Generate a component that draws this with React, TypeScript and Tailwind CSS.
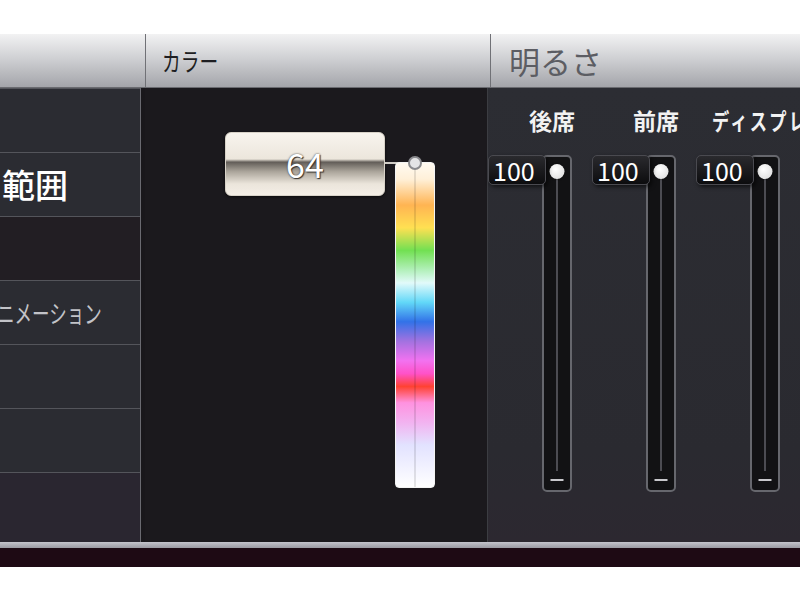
import React from "react";

const jp = "font-['Noto_Sans_CJK_JP','Noto_Sans',sans-serif]";

const rainbow =
  "bg-[linear-gradient(to_bottom,#fffaf2_0%,#fff0d8_5%,#ffb452_13%,#ffe052_20%,#72e052_27%,#b2f0ba_33%,#e2fafa_37%,#62d8f8_43%,#3272e8_49%,#a272e0_55%,#f272f0_61%,#ff52c8_65%,#ff4232_69%,#ff92e0_74%,#f2b2f0_80%,#e2e2ff_87%,#ffffff_100%)]";

function MenuRow({ children, dark }: { children?: React.ReactNode; dark?: boolean }) {
  return (
    <div
      className={`flex h-[64px] items-center overflow-hidden border-t border-[#54555b] ${
        dark ? "bg-[#221e23]" : "bg-[#2b2c32]"
      }`}
    >
      {children}
    </div>
  );
}

function Fader({ label, wide }: { label: string; wide?: boolean }) {
  return (
    <div className="flex w-[104px] flex-col">
      <div
        className={`h-[32px] whitespace-nowrap text-[23px] leading-[32px] font-bold text-[#f2f2f2] ${
          wide ? "ml-[16px]" : "ml-[41px]"
        }`}
      >
        <span className={wide ? "inline-block origin-left scale-x-75 tracking-[3px]" : ""}>{label}</span>
      </div>
      <div className="mt-[19px] flex items-start">
        <div className="z-10 flex h-[30px] w-[58px] items-center rounded-[5px] border border-[#4a4a50] bg-[linear-gradient(to_bottom,#2a2a2e,#0c0c0e)] pl-[4px] text-[25px] leading-none text-white shadow-[2px_2px_4px_rgba(0,0,0,0.6)]">
          100
        </div>
        <div className="relative -ml-[4px] flex h-[337px] w-[30px] justify-center rounded-[5px] border-2 border-[#66676d] bg-[#121214]">
          <div className="mt-[14px] h-[300px] w-[2px] bg-[#4c4c52]" />
          <div className="absolute top-[7px] left-1/2 h-[15px] w-[15px] -translate-x-1/2 rounded-full bg-[radial-gradient(circle_at_40%_35%,#ffffff,#d8d8d8)] shadow-[0_0_2px_rgba(0,0,0,0.8)]" />
          <div className="absolute bottom-[9px] left-1/2 h-[2px] w-[13px] -translate-x-1/2 bg-[#c8c8cc]" />
        </div>
      </div>
    </div>
  );
}

export default function App() {
  return (
    <div className={`flex h-[600px] w-[800px] flex-col overflow-hidden bg-white ${jp}`}>
      <div className="h-[34px]" />
      {/* header */}
      <div className="flex h-[54px] border-b border-[#6a6b70] bg-[linear-gradient(to_bottom,#f2f2f3,#d0d1d4_45%,#a4a5aa)]">
        <div className="w-[146px] border-r border-[#707176]" />
        <div className="flex w-[345px] items-center border-r border-[#707176] pl-[16px]">
          <span className="inline-block origin-left scale-x-75 text-[25px] leading-none text-[#1e1e22]">カラー</span>
        </div>
        <div className="flex flex-1 items-center pl-[18px]">
          <span className="text-[31px] leading-none text-[#5c5d63]">明るさ</span>
        </div>
      </div>

      {/* body */}
      <div className="flex h-[454px]">
        <div className="flex w-[146px]">
          <div className="flex w-[141px] flex-col border-r border-[#6a6a70] bg-[#2b2c32]">
            <MenuRow />
            <MenuRow>
              <span className="pl-[2px] text-[33px] leading-none font-medium text-white">範囲</span>
            </MenuRow>
            <MenuRow dark />
            <MenuRow>
              <span className="-ml-[3px] inline-block origin-left scale-x-[0.7] whitespace-nowrap text-[25px] leading-none text-[#c2c3c8]">
                ニメーション
              </span>
            </MenuRow>
            <MenuRow />
            <MenuRow />
            <div className="flex-1 border-t border-[#54555b] bg-[#2a2630]" />
          </div>
          <div className="flex-1 bg-[#19171b]" />
        </div>

        <div className="flex w-[345px] items-start border-r border-[#3c3d42] bg-[#1b191d] pl-[80px]">
          <div className="mt-[44px] flex h-[64px] w-[160px] items-center justify-center rounded-[6px] border border-[#d8d2c8] bg-[linear-gradient(to_bottom,#f8f4ee_0%,#ece6dc_42%,#625d58_47%,#aaa49a_62%,#ebe5db_82%,#f4eee6_100%)] shadow-[0_1px_3px_rgba(0,0,0,0.6)]">
            <span className="text-[34px] leading-none text-white [text-shadow:0_0_2px_#3a3632,1px_1px_1px_#3a3632]">
              64
            </span>
          </div>
          <div className="mt-[74px] h-[2px] w-[20px] bg-[#d0ccc6]" />
          <div
            className={`relative mt-[74px] -ml-[10px] flex h-[326px] w-[40px] justify-center rounded-[4px] border border-[#f4f4f4] ${rainbow}`}
          >
            <div className="h-full w-[2px] bg-black/10" />
            <div className="absolute -top-[7px] left-1/2 h-[14px] w-[14px] -translate-x-1/2 rounded-full border-2 border-[#8a8a8e] bg-[#e4e4e6]" />
          </div>
        </div>

        <div className="flex flex-1 flex-col bg-[linear-gradient(to_bottom,#2c2d33,#2a2a30_80%,#2c2830)] pt-[16px]">
          <div className="flex">
            <Fader label="後席" />
            <Fader label="前席" />
            <Fader label="ディスプレイ" wide />
          </div>
        </div>
      </div>

      <div className="h-[6px] bg-[linear-gradient(to_bottom,#c4c4cc,#9a9aa2)]" />
      <div className="h-[19px] bg-[#1e0a14]" />
      <div className="flex-1" />
    </div>
  );
}
